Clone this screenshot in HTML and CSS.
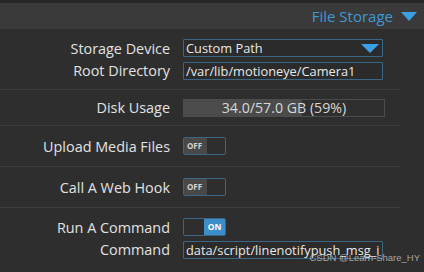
FILE: index.html
```html
<!DOCTYPE html>
<html lang="en">
<head>
    <meta charset="UTF-8">
    <title>File Storage</title>
    <link rel="stylesheet" href="styles.css">
</head>
<body>

<div class="top-strip"></div>
<div class="section-head">
    <span class="section-title">File Storage</span>
    <span class="head-arrow"></span>
</div>

<div class="settings">
    <!-- storage -->
    <div class="group">
        <div class="row">
            <div class="label">Storage Device</div>
            <div class="value">
                <div class="select">Custom Path <span class="select-arrow"></span></div>
            </div>
        </div>
        <div class="row">
            <div class="label">Root Directory</div>
            <div class="value"><input type="text" class="text-input" value="/var/lib/motioneye/Camera1"></div>
        </div>
    </div>

    <div class="group">
        <div class="row row-disk">
            <div class="label">Disk Usage</div>
            <div class="value">
                <div class="progress">
                    <div class="progress-fill" style="width: 59%"></div>
                    <span class="progress-text">34.0/57.0 GB (59%)</span>
                </div>
            </div>
        </div>
    </div>

    <div class="group">
        <div class="row row-check">
            <div class="label">Upload Media Files</div>
            <div class="value"><div class="toggle"><span class="toggle-off">OFF</span><span class="toggle-rest"></span></div></div>
        </div>
    </div>

    <div class="group">
        <div class="row row-check">
            <div class="label">Call A Web Hook</div>
            <div class="value"><div class="toggle"><span class="toggle-off">OFF</span><span class="toggle-rest"></span></div></div>
        </div>
    </div>

    <div class="group last">
        <div class="row">
            <div class="label">Run A Command</div>
            <div class="value"><div class="toggle"><span class="toggle-rest"></span><span class="toggle-on">ON</span></div></div>
        </div>
        <div class="row">
            <div class="label">Command</div>
            <div class="value"><input type="text" class="text-input" value="data/script/linenotifypush_msg_img.sh"></div>
        </div>
    </div>
</div>

<div class="watermark">CSDN @Learn-Share_HY</div>

</body>
</html>
```

FILE: styles.css
```css
body {
    margin: 0;
    background-color: #2e2e2e;
    font-family: "Open Sans", "DejaVu Sans", sans-serif;
    color: #e2e2e2;
    overflow: hidden;
}
.top-strip {
    height: 3px;
    background-color: #272727;
}
.section-head {
    height: 26px;
    background-color: #3a3a3a;
    display: flex;
    align-items: center;
    justify-content: flex-end;
    padding-right: 7px;
}
.section-title {
    color: #3f98d6;
    font-size: 15px;
    margin-right: 8px;
}
.head-arrow {
    width: 0;
    height: 0;
    border-left: 8px solid transparent;
    border-right: 8px solid transparent;
    border-top: 9px solid #3a9fe4;
    margin-top: 1px;
}
.settings {
    width: 400px;
}
.group {
    padding: 8px 0;
    border-bottom: 1px solid #3d3d3d;
}
.group.last {
    border-bottom: none;
}
.row {
    display: flex;
    align-items: center;
    min-height: 22px;
}
.row-disk {
    min-height: 19px;
}
.row-check {
    min-height: 24px;
}
.label {
    width: 183px;
    text-align: right;
    font-size: 14.4px;
    padding-right: 13px;
    box-sizing: border-box;
    white-space: nowrap;
}
.value {
    width: 200px;
}
.select, .text-input {
    box-sizing: border-box;
    width: 200px;
    height: 18px;
    border: 1px solid #3b6787;
    background-color: #2b2b2b;
    color: #e8e8e8;
    font-family: "Open Sans", "DejaVu Sans", sans-serif;
    font-size: 12.8px;
    padding: 0 2px;
    margin: 0;
    border-radius: 1px;
}
.select {
    display: flex;
    align-items: center;
    justify-content: space-between;
    line-height: 16px;
}
.select-arrow {
    width: 0;
    height: 0;
    border-left: 9px solid transparent;
    border-right: 9px solid transparent;
    border-top: 9px solid #3aa0e8;
    margin-right: 1px;
}
.text-input {
    outline: none;
}
.progress {
    position: relative;
    box-sizing: border-box;
    width: 202px;
    height: 18px;
    border: 1px solid #4c4c4c;
    background-color: #2f2f2f;
    display: flex;
}
.progress-fill {
    height: 100%;
    background-color: #4b4b4b;
}
.progress-text {
    position: absolute;
    left: 0;
    right: 0;
    top: 0;
    text-align: center;
    font-size: 14.2px;
    line-height: 16px;
    color: #d8d8d8;
}
.toggle {
    box-sizing: border-box;
    width: 43px;
    height: 18px;
    border: 1px solid #3b6787;
    border-radius: 2px;
    display: flex;
    overflow: hidden;
    background-color: #2e2e2e;
}
.toggle-off {
    width: 20px;
    background-color: #484848;
    color: #d4d4d4;
    font-size: 8px;
    font-weight: bold;
    line-height: 16px;
    padding-left: 3px;
}
.toggle-rest {
    flex: 1;
}
.toggle-on {
    width: 21px;
    background-color: #3d8dc8;
    color: #ffffff;
    font-size: 8.5px;
    font-weight: bold;
    line-height: 16px;
    text-align: center;
}
.watermark {
    position: absolute;
    right: 4px;
    bottom: 9px;
    font-family: "Liberation Sans", Arial, sans-serif;
    font-size: 9.5px;
    color: rgba(220, 220, 220, 0.7);
}
```
